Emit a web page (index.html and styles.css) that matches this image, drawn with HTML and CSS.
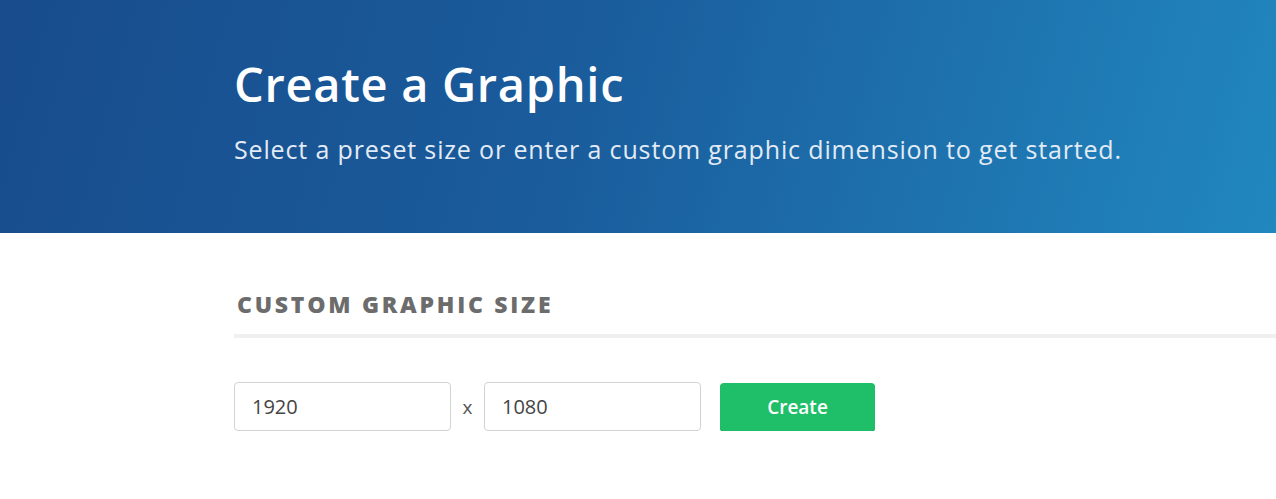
FILE: index.html
```html
<!DOCTYPE html>
<html>
<head>
<meta charset="utf-8">
<link rel="stylesheet" href="styles.css">
</head>
<body>
<header class="hero">
  <div class="hero-inner">
    <h1 class="hero-title">Create a Graphic</h1>
    <p class="hero-sub">Select a preset size or enter a custom graphic dimension to get started.</p>
  </div>
</header>
<main class="content">
  <h2 class="section-title">CUSTOM GRAPHIC SIZE</h2>
  <div class="divider"></div>
  <form class="size-form">
    <input class="size-input" type="text" value="1920">
    <span class="times">x</span>
    <input class="size-input" type="text" value="1080">
    <button class="create-btn" type="button">Create</button>
  </form>
</main>
</body>
</html>
```
FILE: styles.css
```css
html, body {
  margin: 0;
  padding: 0;
  background: #ffffff;
  font-family: "Open Sans", Lato, sans-serif;
}
.hero {
  height: 233px;
  background: linear-gradient(105deg, #184c8c 0%, #1a5c9c 45%, #2187bf 100%);
  color: #ffffff;
  box-sizing: border-box;
  padding: 53px 0 0 234px;
}
.hero-title {
  margin: 0;
  font-size: 47px;
  font-weight: 600;
  line-height: 62px;
  letter-spacing: 0.7px;
}
.hero-sub {
  margin: 17px 0 0 0;
  font-size: 25px;
  font-weight: 400;
  line-height: 34px;
  letter-spacing: 0.85px;
  color: #e2ebf5;
}
.content {
  padding: 0 0 0 234px;
}
.section-title {
  margin: 0;
  padding: 56px 0 0 3px;
  font-size: 23px;
  font-weight: 800;
  letter-spacing: 2.75px;
  color: #6c6c6c;
  line-height: 30px;
}
.divider {
  margin-top: 15px;
  height: 4px;
  background: #f0f0f0;
}
.size-form {
  margin-top: 44px;
  display: flex;
  align-items: center;
}
.size-input {
  width: 217px;
  height: 49px;
  box-sizing: border-box;
  border: 1px solid #d2d2d2;
  border-radius: 4px;
  padding: 0 17px;
  font-family: "Open Sans", Lato, sans-serif;
  font-size: 20px;
  color: #444;
}
.times {
  width: 33px;
  text-align: center;
  font-size: 19px;
  color: #555;
}
.create-btn {
  margin-left: 19px;
  width: 155px;
  height: 48px;
  border: none;
  border-radius: 4px;
  background: #1fbe69;
  color: #fff;
  font-family: "Open Sans", Lato, sans-serif;
  font-size: 19px;
  font-weight: 600;
  box-shadow: 0 1px 0 #17a559;
}
```
